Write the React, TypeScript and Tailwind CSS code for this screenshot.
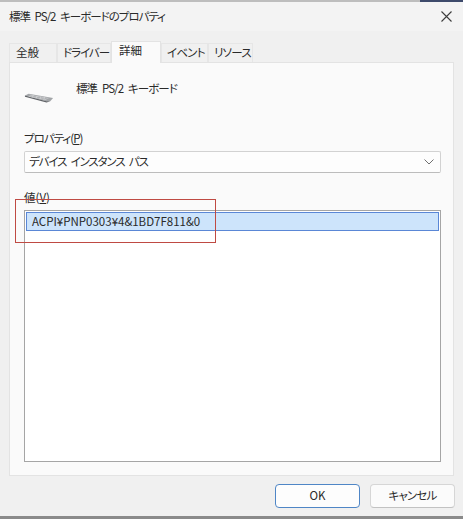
const FONT = "font-['Noto_Sans_CJK_JP','Noto_Sans',sans-serif] [font-feature-settings:'palt']";

const TABS = [
  { label: "全般", width: "w-[48px]", inset: "pl-[6px]", tracking: "" },
  { label: "ドライバー", width: "w-[54px]", inset: "pl-[5px]", tracking: "tracking-[-1px]" },
  { label: "詳細", width: "w-[50px]", inset: "pl-[7px]", tracking: "", active: true },
  { label: "イベント", width: "w-[47px]", inset: "pl-[5px]", tracking: "tracking-[-0.8px]" },
  { label: "リソース", width: "w-[45px]", inset: "pl-[5px]", tracking: "tracking-[-0.8px]" },
];

function KeyboardIcon() {
  return (
    <svg width="30" height="10" viewBox="0 0 32 12" preserveAspectRatio="none" className="shrink-0">
      <polygon points="1,3 5,1 31,6 28,10 24,10" fill="#a2a5a8" />
      <polygon points="1,3 24,10 28,10 24,11.5 1,4.5" fill="#5f6266" />
      <path d="M6 2.5 L26 6.5 M5 4 L24 8 M10 2.5 L9 5 M14 3.5 L13 6 M18 4 L17 7 M22 5 L21 8" stroke="#e0e1e3" strokeWidth="0.6" fill="none" />
    </svg>
  );
}

export default function App() {
  return (
    <div className={`${FONT} relative flex h-[519px] w-[463px] flex-col overflow-hidden bg-[#f0f0f0] text-[11.5px] text-[#2a2a2a]`}>
      <div className="flex h-[2px] shrink-0">
        <div className="flex-1 bg-[#bdbdbd]" />
        <div className="w-[43px] bg-[#3d4a6b]" />
      </div>

      <div className="flex h-[29px] shrink-0 items-center justify-between bg-[#f3f3f3] pl-[9px] pr-[8px]">
        <span className="whitespace-nowrap tracking-[-1px] [word-spacing:3px]">標準 PS/2 キーボードのプロパティ</span>
        <svg width="13" height="13" viewBox="0 0 13 13" className="mr-[2px]">
          <path d="M1.5 1.5 L11.5 11.5 M11.5 1.5 L1.5 11.5" stroke="#3c3c3c" strokeWidth="1.1" fill="none" />
        </svg>
      </div>

      <div className="flex h-[31px] shrink-0 items-end pl-[9px]">
        {TABS.map((tab) =>
          tab.active ? (
            <div
              key={tab.label}
              className={`${tab.width} ${tab.inset} ${tab.tracking} z-10 -mb-px flex h-[22px] items-center whitespace-nowrap border border-b-0 border-[#e3e3e3] bg-[#fafafa] pb-[3px]`}
            >
              {tab.label}
            </div>
          ) : (
            <div
              key={tab.label}
              className={`${tab.width} ${tab.inset} ${tab.tracking} flex h-[19px] items-center whitespace-nowrap border border-b-0 border-[#e6e6e6] bg-[#f0f0f0]`}
            >
              {tab.label}
            </div>
          ),
        )}
      </div>

      <div className="ml-[9px] flex h-[414px] w-[445px] shrink-0 flex-col border border-[#e3e3e3] bg-[#fafafa] pl-[14px] pr-[13px]">
        <div className="flex h-[68px] shrink-0 items-start">
          <div className="mt-[30px] w-[38px]">
            <KeyboardIcon />
          </div>
          <span className="ml-[14px] mt-[16px] whitespace-nowrap leading-[18px] tracking-[-0.9px] [word-spacing:3px]">標準 PS/2 キーボード</span>
        </div>

        <div className="h-[14px] shrink-0 leading-[14px] tracking-[-1px]">
          プロパティ(<span className="underline">P</span>)
        </div>
        <div className="mt-[6px] flex h-[22px] w-[417px] shrink-0 items-center justify-between rounded-[2px] border border-[#d2d2d2] border-b-[#bcbcbc] bg-[#fdfdfd] pl-[4px] pr-[5px]">
          <span className="tracking-[-1.15px] [word-spacing:3px]">デバイス インスタンス パス</span>
          <svg width="12" height="8" viewBox="0 0 12 8">
            <path d="M1.5 1.5 L6 6 L10.5 1.5" stroke="#707070" strokeWidth="1" fill="none" />
          </svg>
        </div>

        <div className="mt-[17px] h-[15px] shrink-0 leading-[15px]">
          値(<span className="underline">V</span>)
        </div>
        <div className="mt-[5px] flex h-[252px] w-[417px] shrink-0 flex-col border border-[#a5a5a5] bg-white p-[1px]">
          <div className="flex h-[19px] items-center border border-[#5a87d6] bg-[#cde4fb] pl-[5px]">
            ACPI¥PNP0303¥4&amp;1BD7F811&amp;0
          </div>
        </div>
      </div>

      <div className="flex flex-1 items-start justify-end gap-[10px] pr-[8px] pt-[8px]">
        <button className="h-[24px] w-[85px] rounded-[4px] border border-[#4f86c6] bg-[#fdfdfd]">
          OK
        </button>
        <button className="h-[24px] w-[85px] rounded-[4px] border border-[#d6d6d6] border-b-[#c2c2c2] bg-[#fbfbfb] tracking-[-0.8px]">
          キャンセル
        </button>
      </div>

      <div className="h-[3px] shrink-0 bg-[#8a8a8a]" />

      {/* red annotation drawn over the dialog */}
      <div className="absolute left-[15px] top-[199px] h-[44px] w-[201px] border border-[#bf4a43]" />
    </div>
  );
}
